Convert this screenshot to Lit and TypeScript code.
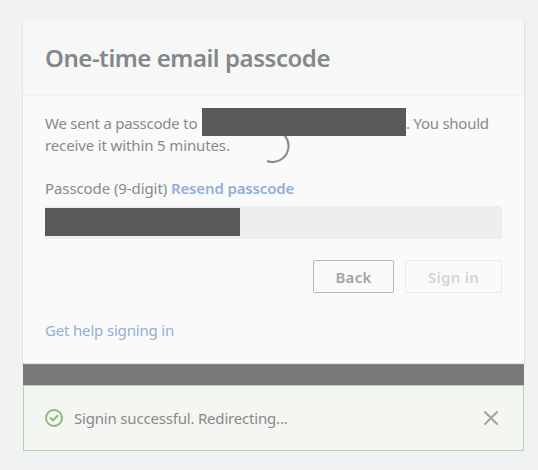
import { LitElement, html, css } from "lit";
import { customElement } from "lit/decorators.js";

@customElement("app-root")
export class AppRoot extends LitElement {
  static styles = css`
    :host {
      display: block;
      box-sizing: border-box;
      width: 100%;
      height: 470px;
      padding: 21px 14px 0 23px;
      background: #f1f3f3;
      color: #88898b;
      font-family: "Noto Sans", "Open Sans", sans-serif;
      font-size: 15px;
      line-height: 22px;
      overflow: hidden;
      white-space: nowrap;
    }
    * { box-sizing: border-box; }
    .card {
      position: relative;
      height: 342px;
      background: #fafafa;
      box-shadow: -1px 0 0 #e4e6e6, 1px 1px 1px #dfe2e2;
    }
    header {
      height: 75px;
      padding: 21px 22px 0;
      background: #f6f8f8;
      border-bottom: 1px solid #eff1f1;
    }
    h1 {
      margin: 0;
      font-size: 24px;
      line-height: 32px;
      font-weight: 600;
      letter-spacing: -0.45px;
      color: #85878a;
    }
    .body { padding: 16px 22px 0; }
    .message { height: 44px; }
    .row { display: flex; }
    .sent { width: 157px; letter-spacing: -0.22px; }
    .receive { letter-spacing: -0.25px; }
    .within { letter-spacing: -0.13px; }
    .digits { width: 126px; letter-spacing: -0.09px; }
    .redacted { background: #595959; }
    .address {
      width: 204px;
      height: 28px;
      margin: -4px 0 -2px;
      position: relative;
      z-index: 2;
    }
    .label { margin-top: 21px; }
    .link { color: #91afd7; }
    .resend { font-weight: 600; letter-spacing: -0.15px; }
    .field {
      height: 33px;
      margin-top: 7px;
      padding-top: 2px;
      background: #edefee;
      border-radius: 2px;
    }
    .code { width: 195px; height: 28px; }
    .actions {
      display: flex;
      justify-content: flex-end;
      gap: 11px;
      margin-top: 21px;
    }
    button {
      width: 81px;
      height: 33px;
      padding: 0;
      border: 1px solid #b6b8b9;
      border-radius: 2px;
      background: #fafafa;
      color: #a0a3a6;
      font: 600 15px/28px "Noto Sans", sans-serif;
      letter-spacing: 0.25px;
    }
    button.disabled { width: 97px; border-color: #e9ebeb; color: #d1d5d5; }
    .help { margin-top: 26px; letter-spacing: -0.17px; }
    .spinner {
      position: absolute;
      left: 233px;
      top: 108px;
      z-index: 1;
    }
    .divider { height: 22px; background: #797979; border-top: 1px solid #a9abab; }
    .notice {
      display: flex;
      align-items: center;
      height: 66px;
      padding: 0 24px 1px 21px;
      background: #f4f6f1;
      border: 1px solid #bbd1ab;
    }
    .notice span { flex: 1; margin-left: 11px; letter-spacing: -0.19px; }
    svg { display: block; fill: none; }
  `;

  render() {
    return html`
      <main class="card">
        <header><h1>One-time email passcode</h1></header>
        <section class="body">
          <div class="message">
            <div class="row">
              <span class="sent">We sent a passcode to</span>
              <span class="redacted address"></span>
              <span class="receive">. You should</span>
            </div>
            <div class="within">receive it within 5 minutes.</div>
          </div>
          <div class="row label">
            <span class="digits">Passcode (9-digit)</span>
            <span class="link resend">Resend passcode</span>
          </div>
          <div class="field"><div class="redacted code"></div></div>
          <div class="actions">
            <button>Back</button>
            <button class="disabled">Sign in</button>
          </div>
          <div class="link help">Get help signing in</div>
        </section>
        <svg class="spinner" width="34" height="34" viewBox="0 0 34 34">
          <path d="M17 1A16 16 0 0 1 32 21A16 16 0 0 1 11 32" stroke="#85878a" stroke-width="2" />
        </svg>
      </main>
      <div class="divider"></div>
      <div class="notice">
        <svg width="18" height="18" viewBox="0 0 18 18" stroke="#92b87c" stroke-width="2">
          <circle cx="9" cy="9" r="8" />
          <path d="M5 8.6L8 11.3L13 6.3" />
        </svg>
        <span>Signin successful. Redirecting...</span>
        <svg width="16" height="16" viewBox="0 0 16 16" stroke="#a0a2a5" stroke-width="2" stroke-linecap="round">
          <path d="M2 2L14 14M14 2L2 14" />
        </svg>
      </div>
    `;
  }
}
